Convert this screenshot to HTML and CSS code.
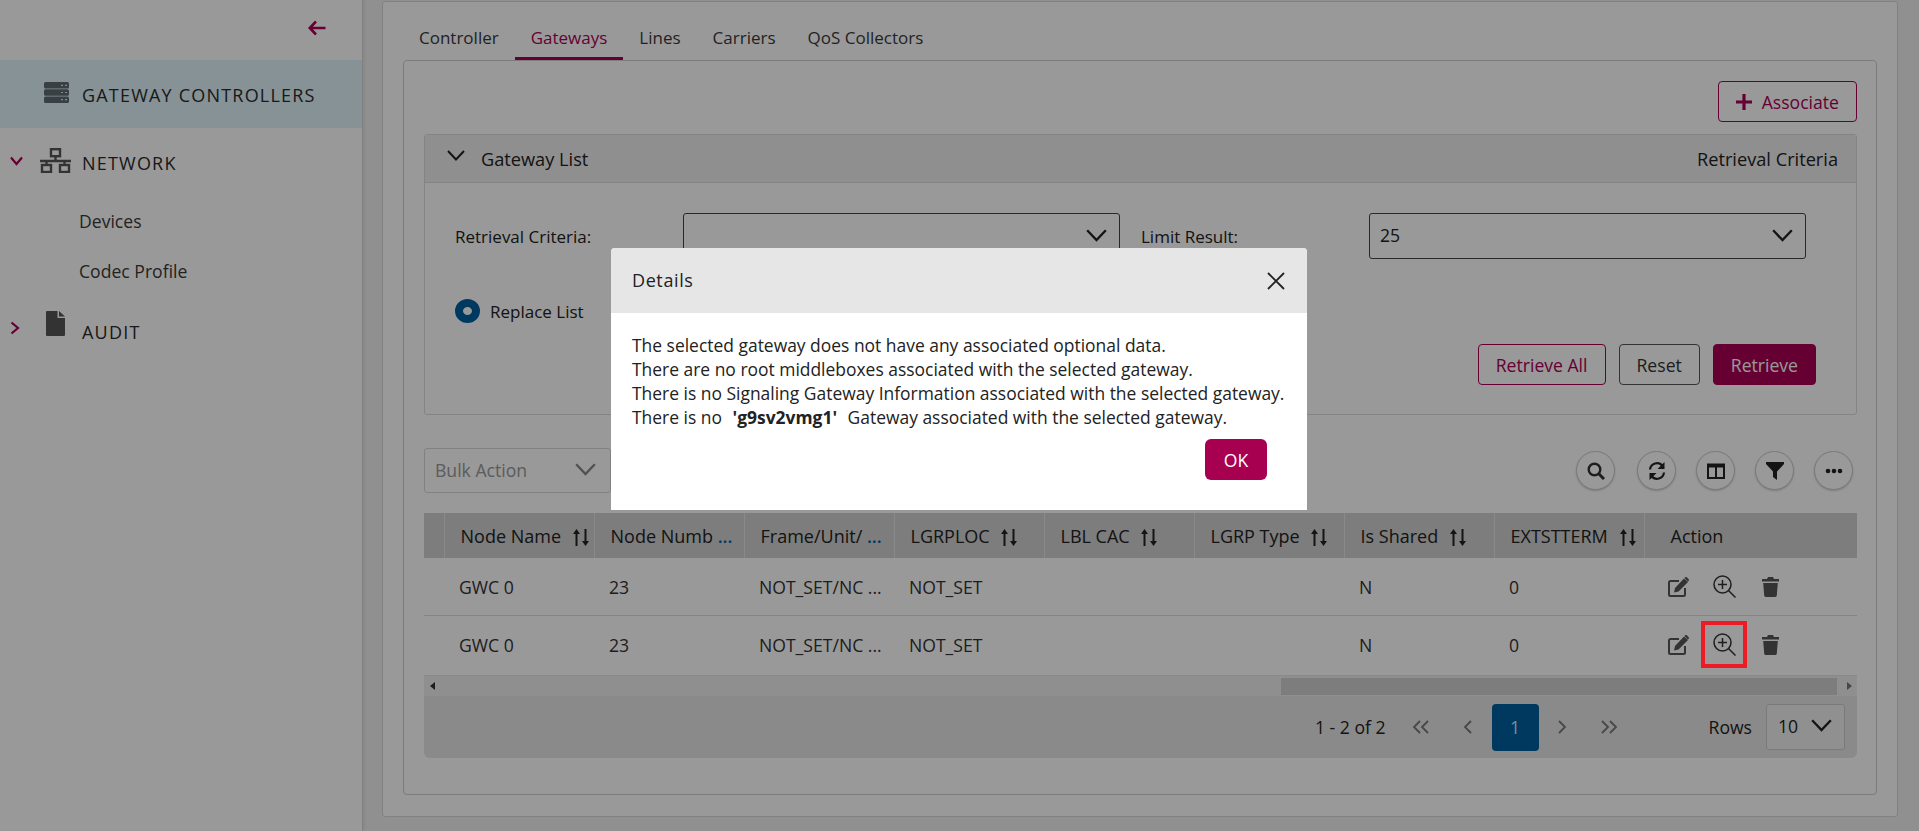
FILE: index.html
```html
<!DOCTYPE html>
<html lang="en">
<head>
  <meta charset="UTF-8" />
  <title>Gateway Controllers</title>
  <link rel="stylesheet" href="styles.css">
</head>
<body>
  <aside class="sidebar">
    <div class="collapse-row">
      <svg class="back-arrow" viewBox="0 0 18 16"><path d="M8 1.5 1.8 8 8 14.5M2 8h15.5" fill="none" stroke="#aa0055" stroke-width="2.6"/></svg>
    </div>
    <div class="nav-item active">
      <svg class="nav-icon server" viewBox="0 0 25 21"><path fill="#606c72" d="M1.5 0h22A1.5 1.5 0 0 1 25 1.5v3.5a1.500 1.500 0 0 1-1.500 1.500h-22A1.500 1.500 0 0 1 0 5V1.500A1.500 1.500 0 0 1 1.500 0zM1.500 7.300h22A1.500 1.500 0 0 1 25 8.800v3.400a1.500 1.500 0 0 1-1.500 1.500h-22A1.500 1.500 0 0 1 0 12.200V8.800a1.500 1.500 0 0 1 1.500-1.500zM1.500 14.500h22a1.500 1.500 0 0 1 1.500 1.500v3.500a1.500 1.500 0 0 1-1.500 1.500h-22A1.500 1.500 0 0 1 0 19.500V16a1.500 1.500 0 0 1 1.500-1.500z"/><path stroke="#d5e4ea" stroke-width="1.200" d="M17 3.300h2M21 3.300h2M17 10.500h2M21 10.500h2M17 17.700h2M21 17.700h2"/></svg>
      <span>GATEWAY CONTROLLERS</span>
    </div>
    <div class="nav-item">
      <svg class="caret" viewBox="0 0 14 10"><path d="M1.500 1.500 7 8l5.500-6.500" fill="none" stroke="#aa0055" stroke-width="2.200"/></svg>
      <svg class="nav-icon network" viewBox="0 0 31 25"><g fill="none" stroke="#555" stroke-width="2.400"><rect x="11" y="1.200" width="9" height="7"/><rect x="2" y="17" width="9" height="7"/><rect x="20" y="17" width="9" height="7"/><path d="M15.500 8v5M0 13h31M6.500 13v4M24.500 13v4"/></g></svg>
      <span>NETWORK</span>
    </div>
    <a class="sub-item">Devices</a>
    <a class="sub-item">Codec Profile</a>
    <div class="nav-item">
      <svg class="caret" viewBox="0 0 10 14"><path d="M1.500 1.500 8 7l-6.500 5.500" fill="none" stroke="#aa0055" stroke-width="2.200"/></svg>
      <svg class="nav-icon file" viewBox="0 0 19 25"><path fill="#555" d="M0 1a1 1 0 0 1 1-1h10.500v7H19v17a1 1 0 0 1-1 1H1a1 1 0 0 1-1-1zM13 0l6 5.500h-6z"/></svg>
      <span>AUDIT</span>
    </div>
  </aside>

  <main class="main">
    <section class="content">
      <nav class="tabs">
        <a class="tab">Controller</a>
        <a class="tab active">Gateways</a>
        <a class="tab">Lines</a>
        <a class="tab">Carriers</a>
        <a class="tab">QoS Collectors</a>
      </nav>

      <div class="tab-card">
        <div class="associate-row">
          <button class="btn btn-outline associate">
            <svg class="plus" viewBox="0 0 14 14"><path d="M7 0v14M0 7h14" stroke="#aa0055" stroke-width="2.800"/></svg>
            Associate
          </button>
        </div>

        <div class="panel">
          <div class="panel-head">
            <svg class="panel-caret" viewBox="0 0 18 11"><path d="M1 1l8 8.500L17 1" fill="none" stroke="#222" stroke-width="2"/></svg>
            <span class="panel-title">Gateway List</span>
            <span class="panel-side">Retrieval Criteria</span>
          </div>
          <div class="panel-body">
            <div class="field-row">
              <label class="field-label">Retrieval Criteria:</label>
              <div class="select wide"><span></span><svg class="chev" viewBox="0 0 18 11"><path d="M1 1l8 8.500L17 1" fill="none" stroke="#222" stroke-width="2"/></svg></div>
              <label class="field-label second">Limit Result:</label>
              <div class="select wide"><span>25</span><svg class="chev" viewBox="0 0 18 11"><path d="M1 1l8 8.500L17 1" fill="none" stroke="#222" stroke-width="2"/></svg></div>
            </div>
            <div class="radio-row">
              <span class="radio"></span>
              <span class="field-label">Replace List</span>
            </div>
            <div class="button-row">
              <button class="btn btn-outline">Retrieve All</button>
              <button class="btn btn-plain">Reset</button>
              <button class="btn btn-solid">Retrieve</button>
            </div>
          </div>
        </div>

        <div class="toolbar">
          <div class="select bulk"><span>Bulk Action</span><svg class="chev" viewBox="0 0 18 11"><path d="M1 1l8 8.500L17 1" fill="none" stroke="#888" stroke-width="2"/></svg></div>
          <div class="tools">
            <button class="tool tool-first"><svg viewBox="0 0 18 18"><circle cx="7.500" cy="7.500" r="5.800" fill="none" stroke="#333" stroke-width="2.400"/><path d="M11.800 11.800 17 17" stroke="#333" stroke-width="3"/></svg></button>
            <button class="tool"><svg viewBox="0 0 18 18"><g fill="none" stroke="#222" stroke-width="2.200"><path d="M2 7.500A7 7 0 0 1 14.500 4"/><path d="M16 10.500A7 7 0 0 1 3.500 14"/></g><path fill="#222" d="M16.500 0v7h-7zM1.500 18v-7h7z"/></svg></button>
            <button class="tool"><svg viewBox="0 0 18 18"><path fill="none" stroke="#222" stroke-width="2" d="M1 3h16v13H1zM9 3v13"/><path fill="#222" d="M0 1.500h18v4H0z"/></svg></button>
            <button class="tool"><svg viewBox="0 0 18 18"><path fill="#222" d="M0 0h18v2L11 9.500V18l-4-3V9.500L0 2z"/></svg></button>
            <button class="tool"><svg viewBox="0 0 18 18"><circle cx="3" cy="9" r="2.300" fill="#222"/><circle cx="9" cy="9" r="2.300" fill="#222"/><circle cx="15" cy="9" r="2.300" fill="#222"/></svg></button>
          </div>
        </div>

        <div class="grid-wrap">
          <table class="grid">
            <colgroup>
              <col class="col-check"><col class="col-data"><col class="col-data"><col class="col-data"><col class="col-data"><col class="col-data"><col class="col-data"><col class="col-data"><col class="col-data"><col class="col-action">
            </colgroup>
            <thead>
              <tr>
                <th></th>
                <th>Node Name <svg class="sort" viewBox="0 0 18 17"><use href="#sort-icon"/></svg></th>
                <th>Node Numb <span class="more">...</span></th>
                <th>Frame/Unit/ <span class="more">...</span></th>
                <th>LGRPLOC <svg class="sort" viewBox="0 0 18 17"><use href="#sort-icon"/></svg></th>
                <th>LBL CAC <svg class="sort" viewBox="0 0 18 17"><use href="#sort-icon"/></svg></th>
                <th>LGRP Type <svg class="sort" viewBox="0 0 18 17"><use href="#sort-icon"/></svg></th>
                <th>Is Shared <svg class="sort" viewBox="0 0 18 17"><use href="#sort-icon"/></svg></th>
                <th>EXTSTTERM <svg class="sort" viewBox="0 0 18 17"><use href="#sort-icon"/></svg></th>
                <th class="action-head">Action</th>
              </tr>
            </thead>
            <tbody>
              <tr>
                <td></td><td>GWC 0</td><td>23</td><td>NOT_SET/NC ...</td><td>NOT_SET</td><td></td><td></td><td>N</td><td>0</td>
                <td class="actions">
                  <div class="action-set">
                    <span class="act"><svg class="ic-edit" viewBox="0 0 21 20"><use href="#edit-icon"/></svg></span>
                    <span class="act"><svg class="ic-zoom" viewBox="0 0 23 23"><use href="#zoom-icon"/></svg></span>
                    <span class="act"><svg class="ic-trash" viewBox="0 0 17 20"><use href="#trash-icon"/></svg></span>
                  </div>
                </td>
              </tr>
              <tr>
                <td></td><td>GWC 0</td><td>23</td><td>NOT_SET/NC ...</td><td>NOT_SET</td><td></td><td></td><td>N</td><td>0</td>
                <td class="actions">
                  <div class="action-set">
                    <span class="act"><svg class="ic-edit" viewBox="0 0 21 20"><use href="#edit-icon"/></svg></span>
                    <span class="act marked"><svg class="ic-zoom" viewBox="0 0 23 23"><use href="#zoom-icon"/></svg></span>
                    <span class="act"><svg class="ic-trash" viewBox="0 0 17 20"><use href="#trash-icon"/></svg></span>
                  </div>
                </td>
              </tr>
            </tbody>
          </table>

          <div class="hscroll">
            <span class="arrow-left"></span>
            <div class="track"><div class="thumb"></div></div>
            <span class="arrow-right"></span>
          </div>

          <div class="pager">
            <span class="pager-info">1 - 2 of 2</span>
            <span class="page-link"><svg viewBox="0 0 20 14"><path d="M9 1 3 7l6 6M17 1l-6 6 6 6" fill="none" stroke="#777" stroke-width="1.800"/></svg></span>
            <span class="page-link"><svg viewBox="0 0 20 14"><path d="M13 1 7 7l6 6" fill="none" stroke="#777" stroke-width="1.800"/></svg></span>
            <span class="page-link current">1</span>
            <span class="page-link"><svg viewBox="0 0 20 14"><path d="m7 1 6 6-6 6" fill="none" stroke="#777" stroke-width="1.800"/></svg></span>
            <span class="page-link"><svg viewBox="0 0 20 14"><path d="m3 1 6 6-6 6M11 1l6 6-6 6" fill="none" stroke="#777" stroke-width="1.800"/></svg></span>
            <span class="rows-label">Rows</span>
            <div class="select rows"><span>10</span><svg class="chev" viewBox="0 0 18 11"><path d="M1 1l8 8.500L17 1" fill="none" stroke="#222" stroke-width="2"/></svg></div>
          </div>
        </div>
      </div>
    </section>
  </main>

  <!-- Modal over the dimmed page -->
  <div class="overlay">
    <div class="dialog">
      <div class="dialog-head">
        <span>Details</span>
        <svg class="close" viewBox="0 0 18 18"><path d="M1 1l16 16M17 1 1 17" stroke="#222" stroke-width="1.800"/></svg>
      </div>
      <div class="dialog-body">
        <p>The selected gateway does not have any associated optional data.</p>
        <p>There are no root middleboxes associated with the selected gateway.</p>
        <p>There is no Signaling Gateway Information associated with the selected gateway.</p>
        <p>There is no <strong>'g9sv2vmg1'</strong> Gateway associated with the selected gateway.</p>
      </div>
      <div class="dialog-foot"><button class="btn-ok">OK</button></div>
    </div>
  </div>

  <!-- Shared icons -->
  <svg class="icon-defs">
    <symbol id="sort-icon" viewBox="0 0 18 17">
      <path fill="#222" d="M4.500 0 8 5H5.500v12h-2V5H1zM13.500 17 10 12h2.500V0h2v12H17z"/>
    </symbol>
    <symbol id="edit-icon" viewBox="0 0 21 20">
      <path fill="none" stroke="#555" stroke-width="2" d="M17 11v6.500a1.500 1.500 0 0 1-1.500 1.500h-13A1.500 1.500 0 0 1 1 17.500v-12A1.500 1.500 0 0 1 2.500 4H11"/>
      <path fill="#555" d="M16 1.500l4 3.500-9.500 9.500-4.500 1 1-4.500zM17 .5c.6-.6 1.400-.6 2 0l1.500 1.500c.6.6.6 1.400 0 2l-.5.5-3.500-3.500z"/>
    </symbol>
    <symbol id="zoom-icon" viewBox="0 0 23 23">
      <circle cx="9.500" cy="9.500" r="8.500" fill="none" stroke="#333" stroke-width="1.500"/>
      <path stroke="#333" stroke-width="1.500" d="M15.500 15.500l7 7M9.500 5v9M5 9.500h9"/>
    </symbol>
    <symbol id="trash-icon" viewBox="0 0 17 20">
      <path fill="#555" d="M6 0h5l1 2h5v2.500H0V2h5zM1.200 6h14.600l-1 12.500A1.600 1.600 0 0 1 13.200 20H3.800a1.600 1.600 0 0 1-1.600-1.500z"/>
    </symbol>
  </svg>
</body>
</html>
```

FILE: styles.css
```css
/* Base styling */
html, body {
  height: 100%;
}
body {
  margin: 0;
  display: flex;
  overflow: hidden;
  background: #f0f0f0;
  color: #222;
  font-family: "Open Sans", "Noto Sans", sans-serif;
  font-size: 17.6px;
}
button {
  font-family: inherit;
  font-size: 17.6px;
  cursor: pointer;
}
.icon-defs {
  display: none;
}

/* Sidebar */
.sidebar {
  width: 362px;
  flex: none;
  background: #fff;
  border-right: 1px solid #d6d6d6;
  box-shadow: 2px 0 3px rgba(0, 0, 0, 0.06);
}
.collapse-row {
  height: 60px;
  display: flex;
  justify-content: flex-end;
  padding: 20px 36px 0 0;
  box-sizing: border-box;
}
.back-arrow {
  width: 18px;
  height: 16px;
}
.nav-item {
  height: 68px;
  box-sizing: border-box;
  padding: 1px 0 0 82px;
  display: flex;
  align-items: center;
  position: relative;
  letter-spacing: 1.2px;
  font-size: 18px;
  color: #2b2b2b;
}
.nav-item.active {
  background: #e0f4fb;
}
.nav-icon {
  position: absolute;
}
.server {
  left: 44px;
  top: 22px;
  width: 25px;
  height: 21px;
}
.network {
  left: 40px;
  top: 20px;
  width: 31px;
  height: 25px;
}
.file {
  left: 46px;
  top: 15px;
  width: 19px;
  height: 25px;
}
.caret {
  position: absolute;
  left: 9px;
  top: 28px;
  width: 15px;
  height: 10px;
}
.nav-item:last-child .caret {
  left: 10px;
  top: 25px;
  width: 10px;
  height: 14px;
}
.sub-item {
  display: block;
  height: 50px;
  line-height: 50px;
  padding-left: 79px;
  color: #3a3a3a;
}
.nav-item:last-child {
  height: 70px;
}

/* Main content */
.main {
  flex: 1;
  min-width: 0;
  padding: 1px 21px 14px 19px;
  box-sizing: border-box;
}
.content {
  height: 100%;
  box-sizing: border-box;
  padding: 0 20px;
  background: #fff;
  border: 1px solid #d8d8d8;
  border-radius: 3px;
}
.tabs {
  display: flex;
  height: 58px;
}
.tab {
  padding: 24px 16px 0;
  line-height: 24px;
  height: 34px;
  font-size: 17px;
  font-weight: 500;
  color: #3a3a3a;
}
.tab.active {
  height: 31px;
  color: #aa0055;
  border-bottom: 3px solid #aa0055;
}
.tab-card {
  border: 1px solid #cfcfcf;
  border-radius: 4px;
  padding: 20px 19px 36px 20px;
}
.associate-row {
  display: flex;
  justify-content: flex-end;
  margin-bottom: 12px;
}
.btn {
  height: 41px;
  padding: 0 17px;
  border-radius: 4px;
  background: transparent;
}
.btn-outline {
  border: 1px solid #aa0055;
  color: #aa0055;
}
.btn-plain {
  border: 1px solid #555;
  color: #333;
}
.btn-solid {
  border: 1px solid #aa0055;
  background: #aa0055;
  color: #fff;
}
.associate {
  display: flex;
  align-items: center;
  gap: 10px;
}
.plus {
  width: 16px;
  height: 16px;
}

/* Gateway List panel */
.panel {
  border: 1px solid #ddd;
  border-radius: 3px;
}
.panel-head {
  height: 47px;
  display: flex;
  align-items: center;
  padding: 0 18px 0 22px;
  background: #eee;
  border-bottom: 1px solid #ddd;
  font-size: 18.2px;
  font-weight: 500;
}
.panel-caret {
  width: 18px;
  height: 11px;
  margin: -6px 16px 0 0;
}
.panel-title {
  flex: 1;
}
.panel-body {
  padding: 30px 40px 29px 30px;
}
.field-row {
  display: flex;
  align-items: center;
}
.field-label {
  font-size: 17px;
  font-weight: 500;
  width: 228px;
  flex: none;
}
.field-label.second {
  margin-left: 21px;
}
.select {
  display: flex;
  align-items: center;
  justify-content: space-between;
  box-sizing: border-box;
  border: 1px solid #444;
  border-radius: 3px;
}
.select.wide {
  width: 437px;
  height: 46px;
  padding: 0 12px 2px 10px;
}
.chev {
  width: 21px;
  height: 13px;
  flex: none;
}
.radio-row {
  display: flex;
  align-items: center;
  gap: 10px;
  margin-top: 40px;
  height: 24px;
}
.radio {
  width: 25px;
  height: 24px;
  border-radius: 50%;
  box-sizing: border-box;
  border: 8px solid #00609f;
  background: #fff;
}
.button-row {
  display: flex;
  justify-content: flex-end;
  gap: 13px;
  margin-top: 21px;
}

/* Grid toolbar */
.toolbar {
  display: flex;
  align-items: center;
  justify-content: space-between;
  margin-top: 33px;
  padding-right: 4px;
}
.select.bulk {
  width: 187px;
  height: 45px;
  padding: 0 14px 2px 10px;
  border-color: #d8d8d8;
  color: #999;
}
.tools {
  display: flex;
  gap: 20px;
}
.tool {
  width: 39px;
  height: 39px;
  padding: 0;
  display: flex;
  align-items: center;
  justify-content: center;
  background: #fff;
  border: 1px solid #ccc;
  border-radius: 50%;
  box-shadow: 0 1px 2px rgba(0, 0, 0, 0.2);
}
.tool-first {
  margin-right: 2px;
}
.tool svg {
  width: 18px;
  height: 18px;
}

/* Table */
.grid-wrap {
  margin-top: 20px;
}
.grid {
  width: 100%;
  table-layout: fixed;
  border-collapse: collapse;
}
.col-check {
  width: 20px;
}
.col-data {
  width: 150px;
}
.grid th {
  height: 45px;
  padding: 0 0 0 16px;
  box-sizing: border-box;
  background: #d0d0d0;
  border-left: 1px solid #e4e4e4;
  text-align: left;
  font-size: 18px;
  font-weight: 500;
  white-space: nowrap;
  overflow: hidden;
}
.grid th:first-child {
  border-left: 0;
}
.grid .action-head {
  padding-left: 26px;
}
.grid td {
  height: 57px;
  padding: 0 0 0 15px;
  border-bottom: 1px solid #dcdcdc;
  color: #333;
  white-space: nowrap;
  overflow: hidden;
}
.grid tr:last-child td {
  border-bottom: 0;
}
.sort {
  width: 18px;
  height: 17px;
  margin-left: 6px;
  vertical-align: -3px;
}
.more {
  color: #00609f;
  font-weight: 600;
}
.grid td.actions {
  padding-left: 11px;
  overflow: visible;
}
.action-set {
  display: flex;
}
.act {
  display: flex;
  width: 46px;
  height: 47px;
  align-items: center;
  justify-content: center;
}
.ic-edit {
  width: 21px;
  height: 20px;
}
.ic-zoom {
  width: 23px;
  height: 23px;
}
.ic-trash {
  width: 17px;
  height: 20px;
}
/* red annotation drawn over the dimmed page */
.act.marked {
  position: relative;
}
.act.marked::after {
  content: "";
  position: absolute;
  inset: 0;
  z-index: 20;
  border: 4px solid #ed1c24;
}

/* Scrollbar and pager */
.hscroll {
  display: flex;
  align-items: center;
  height: 21px;
  margin-top: 2px;
  background: #eee;
  border-top: 1px solid #e4e4e4;
  box-sizing: border-box;
}
.track {
  flex: 1;
  height: 17px;
  padding-left: 840px;
  margin-right: 4px;
  box-sizing: border-box;
}
.thumb {
  height: 100%;
  background: #d0d0d0;
}
.arrow-left,
.arrow-right {
  width: 0;
  height: 0;
  border-top: 4px solid transparent;
  border-bottom: 4px solid transparent;
}
.arrow-left {
  margin: 0 6px;
  border-right: 5px solid #333;
}
.arrow-right {
  margin: 0 5px 0 6px;
  border-left: 5px solid #777;
}
.pager {
  height: 62px;
  display: flex;
  align-items: center;
  justify-content: flex-end;
  padding-right: 12px;
  background: #e6e6e6;
  border-radius: 0 0 6px 6px;
}
.pager-info {
  margin-right: 12px;
}
.page-link {
  width: 47px;
  height: 47px;
  display: flex;
  align-items: center;
  justify-content: center;
  border-radius: 4px;
}
.page-link svg {
  width: 20px;
  height: 14px;
}
.page-link.current {
  background: #00609f;
  color: #cfe8f7;
}
.rows-label {
  margin: 0 14px 0 76px;
}
.select.rows {
  width: 79px;
  height: 46px;
  padding: 0 12px 3px 11px;
  background: #f0f0f0;
  border-color: #ccc;
}

/* Dialog */
.overlay {
  position: fixed;
  inset: 0;
  z-index: 10;
  display: flex;
  justify-content: center;
  align-items: flex-start;
  background: rgba(0, 0, 0, 0.4);
}
.dialog {
  width: 696px;
  height: 262px;
  margin: 248px 1px 0 0;
  background: #fff;
  border-radius: 4px 4px 0 0;
}
.dialog-head {
  height: 65px;
  display: flex;
  align-items: center;
  justify-content: space-between;
  padding: 0 21px;
  background: #e6e6e6;
  border-radius: 4px 4px 0 0;
  font-size: 18px;
  font-weight: 500;
  letter-spacing: 0.6px;
}
.dialog-head span {
  margin-top: -1px;
}
.close {
  width: 18px;
  height: 18px;
  margin-right: 1px;
}
.dialog-body {
  padding: 20px 10px 0 21px;
  line-height: 24px;
  font-size: 17.45px;
}
.dialog-body p {
  margin: 0;
}
.dialog-body strong {
  margin: 0 6px;
}
.dialog-foot {
  display: flex;
  justify-content: flex-end;
  padding: 10px 40px 0 0;
}
.btn-ok {
  width: 62px;
  height: 41px;
  border: 0;
  border-radius: 6px;
  background: #a80050;
  color: #fff;
}
```
